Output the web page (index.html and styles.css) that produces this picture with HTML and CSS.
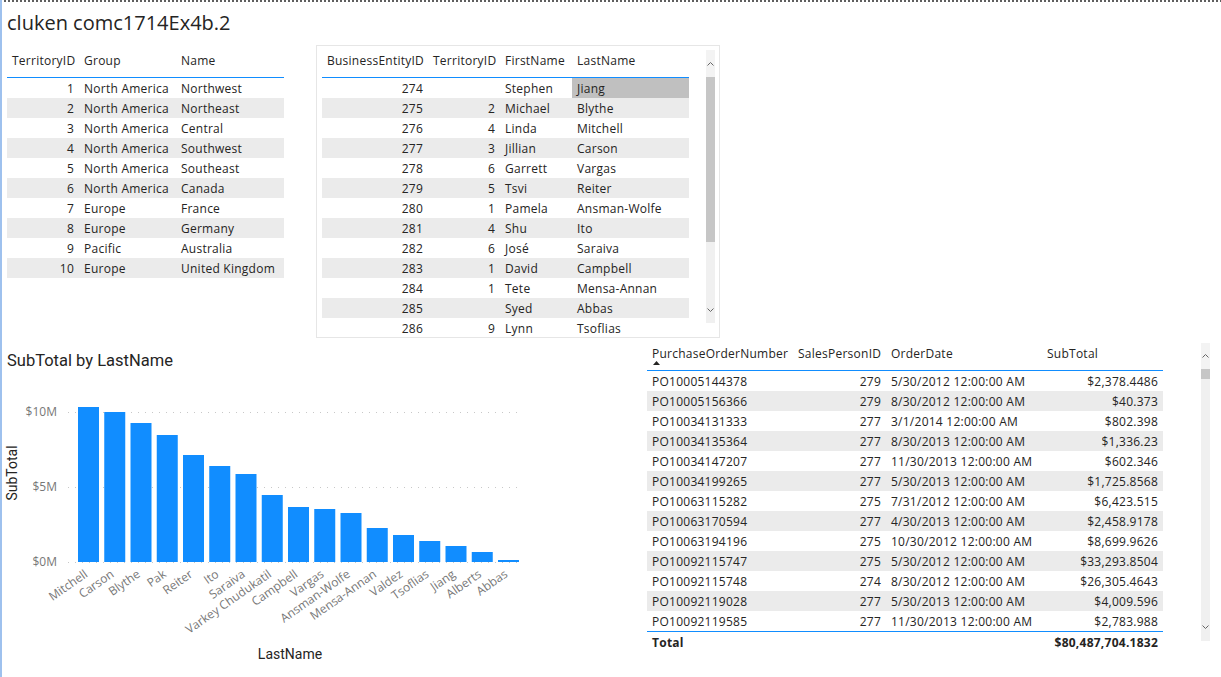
FILE: index.html
```html
<!DOCTYPE html>
<html>
<head>
<meta charset="utf-8">
<title>cluken comc1714Ex4b.2</title>
<link rel="stylesheet" href="styles.css">
</head>
<body>
<div class="page">
  <div class="topline"></div>
  <h1 class="title">cluken comc1714Ex4b.2</h1>

  <div class="row1">
    <div class="tbl t1">
      <div class="tr th"><div>TerritoryID</div><div>Group</div><div>Name</div></div>
      <div class="tbody">
        <div class="tr"><div class="num">1</div><div>North America</div><div>Northwest</div></div>
        <div class="tr"><div class="num">2</div><div>North America</div><div>Northeast</div></div>
        <div class="tr"><div class="num">3</div><div>North America</div><div>Central</div></div>
        <div class="tr"><div class="num">4</div><div>North America</div><div>Southwest</div></div>
        <div class="tr"><div class="num">5</div><div>North America</div><div>Southeast</div></div>
        <div class="tr"><div class="num">6</div><div>North America</div><div>Canada</div></div>
        <div class="tr"><div class="num">7</div><div>Europe</div><div>France</div></div>
        <div class="tr"><div class="num">8</div><div>Europe</div><div>Germany</div></div>
        <div class="tr"><div class="num">9</div><div>Pacific</div><div>Australia</div></div>
        <div class="tr"><div class="num">10</div><div>Europe</div><div>United Kingdom</div></div>
      </div>
    </div>

    <div class="box2">
      <div class="tbl t2">
        <div class="tr th"><div>BusinessEntityID</div><div>TerritoryID</div><div>FirstName</div><div>LastName</div></div>
        <div class="tbody">
          <div class="tr"><div class="num">274</div><div class="num"></div><div>Stephen</div><div class="hl">Jiang</div></div>
          <div class="tr"><div class="num">275</div><div class="num">2</div><div>Michael</div><div>Blythe</div></div>
          <div class="tr"><div class="num">276</div><div class="num">4</div><div>Linda</div><div>Mitchell</div></div>
          <div class="tr"><div class="num">277</div><div class="num">3</div><div>Jillian</div><div>Carson</div></div>
          <div class="tr"><div class="num">278</div><div class="num">6</div><div>Garrett</div><div>Vargas</div></div>
          <div class="tr"><div class="num">279</div><div class="num">5</div><div>Tsvi</div><div>Reiter</div></div>
          <div class="tr"><div class="num">280</div><div class="num">1</div><div>Pamela</div><div>Ansman-Wolfe</div></div>
          <div class="tr"><div class="num">281</div><div class="num">4</div><div>Shu</div><div>Ito</div></div>
          <div class="tr"><div class="num">282</div><div class="num">6</div><div>José</div><div>Saraiva</div></div>
          <div class="tr"><div class="num">283</div><div class="num">1</div><div>David</div><div>Campbell</div></div>
          <div class="tr"><div class="num">284</div><div class="num">1</div><div>Tete</div><div>Mensa-Annan</div></div>
          <div class="tr"><div class="num">285</div><div class="num"></div><div>Syed</div><div>Abbas</div></div>
          <div class="tr"><div class="num">286</div><div class="num">9</div><div>Lynn</div><div>Tsoflias</div></div>
        </div>
      </div>
      <div class="sb sb2">
        <div class="sb-up"><svg width="7" height="4" viewBox="0 0 7 4"><polyline points="0.5,3.5 3.5,0.5 6.5,3.5" fill="none" stroke="#666" stroke-width="1"/></svg></div>
        <div class="sb-thumb"></div>
        <div class="sb-rest"><svg width="7" height="4" viewBox="0 0 7 4"><polyline points="0.5,0.5 3.5,3.5 6.5,0.5" fill="none" stroke="#666" stroke-width="1"/></svg></div>
      </div>
    </div>
  </div>

  <div class="row2">
    <div class="chart">
      <div class="chart-title">SubTotal by LastName</div>
      <svg class="plot" width="538" height="300" viewBox="0 0 538 300">
        <g class="grid-lines">
          <line x1="66" y1="35.5" x2="521" y2="35.5"/>
          <line x1="66" y1="110.5" x2="521" y2="110.5"/>
          <line x1="66" y1="185.5" x2="521" y2="185.5"/>
        </g>
        <g class="ticks">
          <text x="55" y="39">$10M</text>
          <text x="55" y="114">$5M</text>
          <text x="55" y="189">$0M</text>
        </g>
        <text class="axis-title" transform="translate(15,96) rotate(-90)">SubTotal</text>
        <g class="bars">
          <rect x="76" y="30" width="21" height="155"/>
          <rect x="102.25" y="35" width="21" height="150"/>
          <rect x="128.5" y="46" width="21" height="139"/>
          <rect x="154.75" y="58" width="21" height="127"/>
          <rect x="181" y="78" width="21" height="107"/>
          <rect x="207.25" y="89" width="21" height="96"/>
          <rect x="233.5" y="97" width="21" height="88"/>
          <rect x="259.75" y="118" width="21" height="67"/>
          <rect x="286" y="130" width="21" height="55"/>
          <rect x="312.25" y="132" width="21" height="53"/>
          <rect x="338.5" y="136" width="21" height="49"/>
          <rect x="364.75" y="151" width="21" height="34"/>
          <rect x="391" y="158" width="21" height="27"/>
          <rect x="417.25" y="164" width="21" height="21"/>
          <rect x="443.5" y="169" width="21" height="16"/>
          <rect x="469.75" y="175" width="21" height="10"/>
          <rect x="496" y="183" width="21" height="2"/>
        </g>
        <g class="xlabels">
          <text transform="translate(86.5,199) rotate(-35)">Mitchell</text>
          <text transform="translate(112.75,199) rotate(-35)">Carson</text>
          <text transform="translate(139,199) rotate(-35)">Blythe</text>
          <text transform="translate(165.25,199) rotate(-35)">Pak</text>
          <text transform="translate(191.5,199) rotate(-35)">Reiter</text>
          <text transform="translate(217.75,199) rotate(-35)">Ito</text>
          <text transform="translate(244,199) rotate(-35)">Saraiva</text>
          <text transform="translate(270.25,199) rotate(-35)">Varkey Chudukatil</text>
          <text transform="translate(296.5,199) rotate(-35)">Campbell</text>
          <text transform="translate(322.75,199) rotate(-35)">Vargas</text>
          <text transform="translate(349,199) rotate(-35)">Ansman-Wolfe</text>
          <text transform="translate(375.25,199) rotate(-35)">Mensa-Annan</text>
          <text transform="translate(401.5,199) rotate(-35)">Valdez</text>
          <text transform="translate(427.75,199) rotate(-35)">Tsoflias</text>
          <text transform="translate(454,199) rotate(-35)">Jiang</text>
          <text transform="translate(480.25,199) rotate(-35)">Alberts</text>
          <text transform="translate(506.5,199) rotate(-35)">Abbas</text>
        </g>
        <text class="axis-title" x="288" y="282" text-anchor="middle">LastName</text>
      </svg>
    </div>

    <div class="tbl t3">
      <div class="tr th">
        <div><span class="htext">PurchaseOrderNumber</span><svg class="sort" width="7" height="4" viewBox="0 0 7 4"><polygon points="0,4 3.5,0 7,4" fill="#252423"/></svg></div>
        <div>SalesPersonID</div><div>OrderDate</div><div>SubTotal</div>
      </div>
      <div class="tbody">
        <div class="tr"><div>PO10005144378</div><div class="num">279</div><div>5/30/2012 12:00:00 AM</div><div class="num">$2,378.4486</div></div>
        <div class="tr"><div>PO10005156366</div><div class="num">279</div><div>8/30/2012 12:00:00 AM</div><div class="num">$40.373</div></div>
        <div class="tr"><div>PO10034131333</div><div class="num">277</div><div>3/1/2014 12:00:00 AM</div><div class="num">$802.398</div></div>
        <div class="tr"><div>PO10034135364</div><div class="num">277</div><div>8/30/2013 12:00:00 AM</div><div class="num">$1,336.23</div></div>
        <div class="tr"><div>PO10034147207</div><div class="num">277</div><div>11/30/2013 12:00:00 AM</div><div class="num">$602.346</div></div>
        <div class="tr"><div>PO10034199265</div><div class="num">277</div><div>5/30/2013 12:00:00 AM</div><div class="num">$1,725.8568</div></div>
        <div class="tr"><div>PO10063115282</div><div class="num">275</div><div>7/31/2012 12:00:00 AM</div><div class="num">$6,423.515</div></div>
        <div class="tr"><div>PO10063170594</div><div class="num">277</div><div>4/30/2013 12:00:00 AM</div><div class="num">$2,458.9178</div></div>
        <div class="tr"><div>PO10063194196</div><div class="num">275</div><div>10/30/2012 12:00:00 AM</div><div class="num">$8,699.9626</div></div>
        <div class="tr"><div>PO10092115747</div><div class="num">275</div><div>5/30/2012 12:00:00 AM</div><div class="num">$33,293.8504</div></div>
        <div class="tr"><div>PO10092115748</div><div class="num">274</div><div>8/30/2012 12:00:00 AM</div><div class="num">$26,305.4643</div></div>
        <div class="tr"><div>PO10092119028</div><div class="num">277</div><div>5/30/2013 12:00:00 AM</div><div class="num">$4,009.596</div></div>
        <div class="tr"><div>PO10092119585</div><div class="num">277</div><div>11/30/2013 12:00:00 AM</div><div class="num">$2,783.988</div></div>
      </div>
      <div class="tr total"><div>Total</div><div></div><div></div><div class="num">$80,487,704.1832</div></div>
    </div>

    <div class="sb sb3">
      <div class="sb-up"><svg width="7" height="4" viewBox="0 0 7 4"><polyline points="0.5,3.5 3.5,0.5 6.5,3.5" fill="none" stroke="#666" stroke-width="1"/></svg></div>
      <div class="sb-thumb"></div>
      <div class="sb-rest"><svg width="7" height="4" viewBox="0 0 7 4"><polyline points="0.5,0.5 3.5,3.5 6.5,0.5" fill="none" stroke="#666" stroke-width="1"/></svg></div>
    </div>
  </div>
</div>
</body>
</html>
```

FILE: styles.css
```css
* { box-sizing: border-box; }
html, body { margin: 0; padding: 0; background: #fff; }
body {
  font-family: "Open Sans", "Noto Sans", sans-serif;
  font-size: 12px;
  color: #252423;
}
.page {
  width: 1221px;
  height: 677px;
  border-left: 2px solid #9ec1ee;
  overflow: hidden;
}
.topline {
  height: 2px;
  margin-left: -2px;
  background: repeating-linear-gradient(90deg, #5f5f5f 0 2px, transparent 2px 4px);
}
.title {
  margin: 8px 0 0 0;
  padding-left: 5px;
  font-size: 20px;
  font-weight: 400;
  line-height: 26px;
  color: #252423;
}

/* tables */
.tbl { letter-spacing: 0.25px; }
.tbl .tr {
  display: grid;
  grid-template-columns: var(--cols);
  height: 20px;
}
.tbl .tr > div {
  padding: 0 5px;
  line-height: 22px;
  height: 20px;
  white-space: nowrap;
  overflow: hidden;
}
.tbl .tr > .num { text-align: right; }
.tbl .tbody .tr:nth-child(even) > div { background: #ebebeb; }
.tbl .tbody .tr > .hl { background: #c0c0c0; }
.tbl .th {
  height: 33px;
  padding-top: 5px;
  border-bottom: 1px solid #118dff;
  align-items: start;
}
.tbl .th > div { height: auto; overflow: visible; }

.row1 {
  display: flex;
  align-items: flex-start;
  margin-top: 9px;
  padding-left: 5px;
}
.t1 { --cols: 72px 97px 108px; width: 277px; }

.box2 {
  margin-left: 32px;
  width: 404px;
  height: 293px;
  border: 1px solid #e6e6e6;
  padding-left: 5px;
  display: flex;
  align-items: flex-start;
  overflow: hidden;
}
.t2 { --cols: 106px 72px 72px 117px; width: 367px; flex: none; }
.t2 .th { height: 32px; padding-top: 4px; }

/* scrollbars */
.sb {
  width: 9px;
  background: #f0f0f0;
  display: flex;
  flex-direction: column;
  flex: none;
}
.sb svg { display: block; }
.sb-up { display: flex; align-items: center; justify-content: center; background: #f3f3f3; }
.sb-thumb { background: #c6c6c6; }
.sb-rest { flex: 1; display: flex; align-items: flex-end; justify-content: center; }
.sb2 { margin-left: 17px; margin-top: 4px; height: 273px; }
.sb2 .sb-up { height: 27px; }
.sb2 .sb-thumb { height: 165px; }
.sb2 .sb-rest { padding-bottom: 11px; }

.row2 {
  display: flex;
  align-items: flex-start;
  margin-top: 5px;
}
.chart { width: 538px; height: 334px; flex: none; }
.chart-title {
  padding: 7px 0 5px 5px;
  line-height: 22px;
  font-family: "Roboto", "Noto Sans", sans-serif;
  font-size: 16.5px;
  color: #252423;
}
.plot { display: block; }
.grid-lines line { stroke: #c8c8c8; stroke-width: 1; stroke-dasharray: 1 6; }
.ticks text { text-anchor: end; font-size: 12px; fill: #777; }
.axis-title { font-family: "Roboto", "Noto Sans", sans-serif; font-size: 14px; fill: #252423; text-anchor: middle; }
.bars rect { fill: #118dff; }
.xlabels text { text-anchor: end; font-size: 12px; fill: #777; }

.t3 { --cols: 146px 93px 156px 121px; width: 516px; margin-left: 107px; flex: none; }
.t3 .th { height: 28px; padding-top: 0; }
.t3 .th .htext { display: block; line-height: 22px; }
.t3 .th > div { line-height: 22px; }
.t3 .th .sort { display: block; margin: -4px 0 0 1px; }
.t3 .total {
  height: 21px;
  border-top: 1px solid #118dff;
}
.t3 .total > div { font-weight: 700; }

.sb3 { margin-left: 38px; height: 298px; }
.sb3 .sb-up { height: 26px; }
.sb3 .sb-thumb { height: 10px; }
.sb3 .sb-rest { padding-bottom: 12px; }
```
